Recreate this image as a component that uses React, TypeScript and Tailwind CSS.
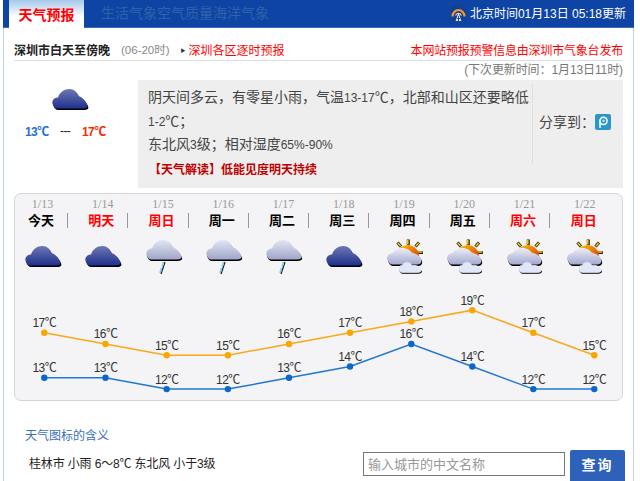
import React from 'react';

const CJK = "font-['Liberation_Sans','Noto_Sans_CJK_SC',sans-serif]";

const days = [
  { date: '1/13', name: '今天', red: false, icon: 'cloud' },
  { date: '1/14', name: '明天', red: true, icon: 'cloud' },
  { date: '1/15', name: '周日', red: true, icon: 'rain' },
  { date: '1/16', name: '周一', red: false, icon: 'rain' },
  { date: '1/17', name: '周二', red: false, icon: 'rain' },
  { date: '1/18', name: '周三', red: false, icon: 'cloud' },
  { date: '1/19', name: '周四', red: false, icon: 'sun' },
  { date: '1/20', name: '周五', red: false, icon: 'sun' },
  { date: '1/21', name: '周六', red: true, icon: 'sun' },
  { date: '1/22', name: '周日', red: true, icon: 'sun' },
];

const highs = [17, 16, 15, 15, 16, 17, 18, 19, 17, 15];
const lows = [13, 13, 12, 12, 13, 14, 16, 14, 12, 12];
const xs = [29.3, 90.5, 151.7, 212.9, 274, 335, 396.3, 457.3, 518.3, 579.3];
const yOf = (t: number) => 42.7 + (17 - t) * 11.28;

const CLOUD_PATH = 'M2 17 C0 13 3 9.5 7 9.5 C9 4 13 1 18.5 1 C23 1 26 4 27.5 8 C31 9 35 13 36.5 17.5 C37 19.5 35 20.5 32 20.5 L6 20.5 C4.5 20.5 3 19 2 17 Z';

// the degree sign comes from the CJK face, as in the page
const Deg = () => <span className="font-['Noto_Sans_CJK_SC',sans-serif]">℃</span>;

function DarkCloud({ id }: { id: string }) {
  return (
    <svg width="38" height="23" viewBox="0 0 38 23" className="block">
      <defs>
        <linearGradient id={id} x1="0" y1="0" x2="0" y2="1">
          <stop offset="0" stopColor="#6c78b4" />
          <stop offset="1" stopColor="#20308c" />
        </linearGradient>
      </defs>
      <path d={CLOUD_PATH} transform="translate(0.8,1.6)" fill="#000" />
      <path d={CLOUD_PATH} fill={`url(#${id})`} />
    </svg>
  );
}

function RainCloud({ id }: { id: string }) {
  return (
    <svg width="38" height="36" viewBox="0 0 38 36" className="block">
      <defs>
        <linearGradient id={id} x1="0" y1="0" x2="0" y2="1">
          <stop offset="0" stopColor="#e2e5f2" />
          <stop offset="1" stopColor="#a0a6c8" />
        </linearGradient>
      </defs>
      <path d={CLOUD_PATH} transform="translate(0.6,1.4)" fill="#000" />
      <path d={CLOUD_PATH} fill={`url(#${id})`} />
      <path d="M20 23 L16 35" stroke="#111" strokeWidth="1.2" />
      <path d="M18.6 23 L17.2 27.5 M16.6 29 L15 34" stroke="#7fd0ea" strokeWidth="1.8" />
    </svg>
  );
}

function SunCloud({ id }: { id: string }) {
  const big = 'M2 22 C-0.5 18 2.5 14 7 14 C9 10 13 8.5 18 9 C22 9.5 24.5 11.5 25.5 14 C30 14 35 17.5 35.5 21.5 C35.5 24.5 33.5 25.5 31 25.5 L6 25.5 C4.5 25.5 3 24 2 22 Z';
  const small = 'M13.5 31.5 C11.5 29 13 26.5 16 26.5 C18 22.5 24 22.5 26 26.5 C30 25.5 35 28 35.5 31 C35.5 32.5 34 33.5 32 33.5 L16 33.5 C15 33.5 14 32.5 13.5 31.5 Z';
  return (
    <svg width="38" height="36" viewBox="0 0 38 36" className="block">
      <defs>
        <linearGradient id={id} x1="0" y1="0" x2="0" y2="1">
          <stop offset="0" stopColor="#eceef8" />
          <stop offset="1" stopColor="#a4a8cf" />
        </linearGradient>
        <linearGradient id={`${id}-s`} x1="0" y1="0" x2="1" y2="1">
          <stop offset="0" stopColor="#f8d000" />
          <stop offset="1" stopColor="#e02c10" />
        </linearGradient>
      </defs>
      <g stroke="#222" strokeWidth="3">
        <path d="M22.3 0.5 V6 M11.5 3.5 L15 7.5 M33 3.5 L29.5 7.5 M37 13.5 H31.5" />
      </g>
      <g stroke="#f5c800" strokeWidth="1.6">
        <path d="M21.8 1 V5.5 M11.8 4 L14.6 7 M32.6 4 L30 7 M36.5 13 H32" />
      </g>
      <path d="M11 14 A11 10.5 0 0 1 32.5 19 L27 20 L14 16 Z" fill={`url(#${id}-s)`} />
      <path d="M14 15 A8.5 8 0 0 1 29 17 L24 18 Z" fill="#f8d84a" />
      <path d={big} transform="translate(0.7,1.4)" fill="#000" />
      <path d={big} fill={`url(#${id})`} />
      <path d={small} transform="translate(0.5,1.2)" fill="#000" />
      <path d={small} fill="#e2e6f9" stroke="#f4f3f5" strokeWidth="0.6" />
    </svg>
  );
}

function Tower() {
  return (
    <svg width="15" height="15" viewBox="0 0 15 15" className="block">
      <rect width="15" height="15" fill="#123f96" />
      <path d="M1.5 10.5 A6 6.5 0 0 1 13.5 10.5" fill="none" stroke="#f09a30" strokeWidth="2.2" />
      <path d="M4.6 9.5 A3 3 0 0 1 10.4 9.5" fill="none" stroke="#f8d8a0" strokeWidth="1.2" />
      <path d="M7.5 6.5 L4.6 15 H10.4 Z" fill="#e4e6f0" />
      <path d="M7.5 10 V15 M6 12.5 H9" stroke="#123f96" strokeWidth="0.9" />
    </svg>
  );
}

function ShareIcon() {
  return (
    <svg width="16" height="16" viewBox="0 0 16 16" className="block">
      <rect width="16" height="16" rx="2" fill="#2b97c9" />
      <circle cx="8.5" cy="6.8" r="3.6" fill="none" stroke="#fff" strokeWidth="1.5" />
      <path d="M5 7 V14" stroke="#fff" strokeWidth="1.5" />
      <circle cx="8.5" cy="6.8" r="1.2" fill="#bfe6f5" />
    </svg>
  );
}

function Chart() {
  const labels = (vals: number[]) =>
    vals.map((t, i) => (
      <text key={i} x={xs[i]} y={yOf(t) - 5.5} textAnchor="middle" fontSize="12" fill="#333" fontFamily="Liberation Sans, Noto Sans CJK SC, sans-serif" letterSpacing="-0.6">
        {t}<tspan fontFamily="Noto Sans CJK SC, sans-serif">℃</tspan>
      </text>
    ));
  const line = (vals: number[]) => vals.map((t, i) => `${xs[i]},${yOf(t)}`).join(' ');
  return (
    <svg width="607" height="110" className="block">
      <polyline points={line(highs)} fill="none" stroke="#f9a81c" strokeWidth="1.5" />
      <polyline points={line(lows)} fill="none" stroke="#1f78d4" strokeWidth="1.5" />
      {highs.map((t, i) => <circle key={i} cx={xs[i]} cy={yOf(t)} r="3.2" fill="#f9a600" />)}
      {lows.map((t, i) => <circle key={i} cx={xs[i]} cy={yOf(t)} r="3.2" fill="#0a68cc" />)}
      {labels(highs)}
      {labels(lows)}
    </svg>
  );
}

export default function App() {
  return (
    <div className={`w-[640px] h-[481px] overflow-hidden bg-white ${CJK}`}>
      <div className="ml-[3px] w-[631px] h-[481px] border-x border-[#bcd4ea]">
        {/* top bar */}
        <div className="-mx-px h-[28px] flex items-end bg-[#0e44a4] pl-[6px] border-b border-[#3a6cc0]">
          <div className="w-[75px] h-[28px] -mb-px text-center bg-gradient-to-b from-[#a6c8ea] to-white to-60% text-[#f00] text-[14px] font-bold leading-[30px]">
            天气预报
          </div>
          <div className="ml-[17px] h-[27px] text-[14px] leading-[26px] text-[#2f62aa]">生活气象空气质量海洋气象</div>
          <div className="ml-auto mr-[8px] h-[27px] flex items-center gap-[4px] text-white text-[12px]">
            <Tower />
            <span>北京时间01月13日 05:18更新</span>
          </div>
        </div>

        <div className="mx-[10px] h-[33px] flex items-center pt-[14px] border-b border-[#dddddd] text-[12px] w-[609px]">
          <span className="font-bold text-[#222]">深圳市白天至傍晚</span>
          <span className="ml-[11px] text-[11.5px] text-[#888]">(06-20时)</span>
          <span className="ml-[11px] text-[5px] text-[#333]">▶</span>
          <span className="ml-[3px] text-[#f00]">深圳各区逐时预报</span>
          <span className="ml-auto text-[#f00] tracking-[-0.2px]">本网站预报预警信息由深圳市气象台发布</span>
        </div>
        <div className="mx-[10px] w-[609px] h-[19px] text-right text-[12px] leading-[19px] text-[#777] tracking-[-0.1px]">
          (下次更新时间：1月13日11时)
        </div>

        {/* today */}
        <div className="mx-[10px] w-[609px] h-[108px] flex">
          <div className="w-[124px] pt-[8px]">
            <div className="pl-[37px] h-[28px]"><DarkCloud id="today" /></div>
            <div className="mt-[6px] pl-[11px] flex text-[12px] font-bold tracking-[-0.6px]">
              <span className="w-[35px] text-[#1f6fd8]">13<Deg /></span>
              <span className="w-[22px] text-[#222] font-normal">---</span>
              <span className="text-[#f62c00]">17<Deg /></span>
            </div>
          </div>
          <div className="w-[485px] bg-[#eeeeee] flex">
            <div className="w-[395px] h-[79px] pl-[10px] mt-[4px] border-r border-dotted border-[#d0d0d0] text-[14px] leading-[24px] text-[#444]">
              <div className="h-[24px] w-[384px] whitespace-nowrap">阴天间多云，有零星小雨，气温<span className="text-[12px]">13-17</span><Deg />，北部和山区还要略低</div>
              <div className="h-[24px]"><span className="text-[12px]">1-2</span><Deg />；</div>
              <div className="h-[24px]">东北风<span className="text-[12px]">3</span>级；相对湿度<span className="text-[12px]">65%-90%</span></div>
              <div className="mt-[2px] ml-[1px] whitespace-nowrap text-[12px] font-bold text-[#c00000]">【天气解读】低能见度明天持续</div>
            </div>
            <div className="ml-[6px] h-[50px] mt-[17px] flex items-center text-[14px] text-[#444]">
              <span>分享到：</span>
              <ShareIcon />
            </div>
          </div>
        </div>

        {/* ten days */}
        <div className="mx-[10px] w-[609px] h-[208px] mt-[5px] rounded-[7px] border border-[#d6d6d6] bg-[#f4f3f5]">
          <div className="h-[96px] pt-[3px] grid grid-cols-[repeat(10,60.25px)]">
            {days.map((d, i) => (
              <div key={i}>
                <div className="w-[55px] text-center text-[12px] leading-[14px] text-[#999] font-['Liberation_Serif',serif]">{d.date}</div>
                <div className={`w-[53px] h-[15px] mt-[2px] text-center text-[13px] leading-[15px] font-bold ${d.red ? 'text-[#f00]' : 'text-black'} ${i < 9 ? 'border-r border-[#999]' : ''}`}>
                  {d.name}
                </div>
                <div className="ml-[9px] mt-[11px]">
                  {d.icon === 'cloud' && <div className="pt-[6px]"><DarkCloud id={`c${i}`} /></div>}
                  {d.icon === 'rain' && <RainCloud id={`r${i}`} />}
                  {d.icon === 'sun' && <SunCloud id={`s${i}`} />}
                </div>
              </div>
            ))}
          </div>
          <Chart />
        </div>

        {/* bottom */}
        <div className="mx-[10px] mt-[27px] pl-[11px] text-[12px] leading-[16px] text-[#3a6fc0]">天气图标的含义</div>
        <div className="mx-[10px] w-[611px] mt-[8px] flex items-start">
          <span className="ml-[15px] mt-[2px] text-[12px] text-[#222] tracking-[-0.15px]">桂林市 小雨 <span>6～8<Deg /></span> 东北风 小于3级</span>
          <input
            readOnly
            placeholder="输入城市的中文名称"
            className="ml-auto w-[202px] h-[24px] px-[4px] border border-[#777] bg-white text-[13px] placeholder:text-[#999] outline-none"
          />
          <button className="ml-[5px] w-[55px] h-[31px] -mt-[2px] rounded-t-[2px] bg-[#2d62b8] text-white font-bold text-[14px] tracking-[2px]">查询</button>
        </div>
      </div>
    </div>
  );
}
